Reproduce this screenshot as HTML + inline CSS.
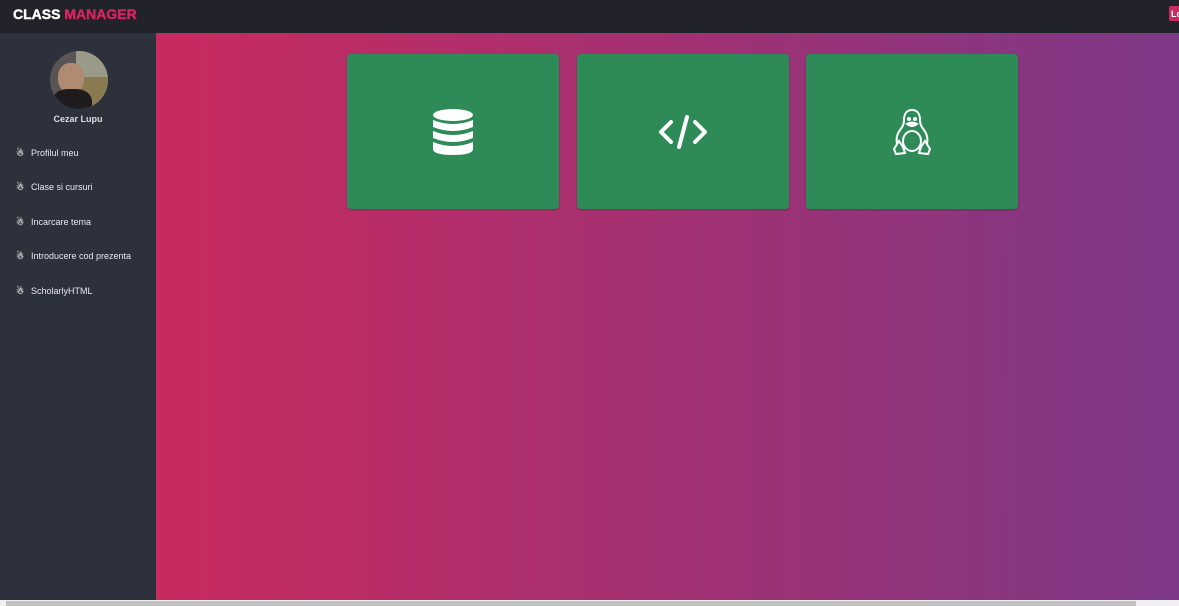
<!DOCTYPE html>
<html><head><meta charset="utf-8"><style>
*{margin:0;padding:0;box-sizing:border-box}
body{width:1179px;height:606px;overflow:hidden;font-family:"Liberation Sans",sans-serif;background:#2d313b;position:relative}
.top{position:absolute;left:0;top:0;width:1179px;height:33px;background:#22232a}
.logo{position:absolute;left:13px;top:6px;font-weight:700;font-size:14px;color:#fff;letter-spacing:0;-webkit-text-stroke:0.4px #fff}
.logo span{color:#d7245f;-webkit-text-stroke:0.4px #d7245f}
.lo{position:absolute;left:1169px;top:6px;width:14px;height:15px;background:#c92a5f;border-radius:2px;color:#fff;font-size:9px;font-weight:bold;padding:3px 0 0 2px}
.av{position:absolute;left:50px;top:51px;width:58px;height:58px;border-radius:50%;overflow:hidden;background:linear-gradient(90deg,#5a5555 0 45%,#9a9a88 45%)}
.av i{position:absolute;left:8px;top:12px;width:26px;height:30px;border-radius:45%;background:#b08a72}
.av u{position:absolute;left:2px;top:38px;width:40px;height:30px;border-radius:40%;background:#1e1c1e}
.av s{position:absolute;left:30px;top:26px;width:30px;height:34px;background:#8a7a50}
.name{position:absolute;left:0;width:156px;top:114px;text-align:center;color:#ddd;font-size:9px;font-weight:bold}
.nav{position:absolute;left:16px;color:#e8e8f0;font-size:9px}
.nav b{display:inline-block;width:7px;margin-right:8px;color:#ccc;font-size:9px}
.main{position:absolute;left:156px;top:33px;width:1023px;height:567px;background:linear-gradient(90deg,#c92a5f,#7d3886)}
.card{position:absolute;top:54px;width:212px;height:155px;background:#2e8b57;border-radius:4px;display:flex;align-items:center;justify-content:center;box-shadow:0 1px 2px rgba(0,0,0,.2)}
.sb{position:absolute;left:0;top:600px;width:1179px;height:6px;background:#f0f0f0}
.sb div{position:absolute;left:6px;top:1px;width:1130px;height:5px;background:#c1c1c1}
</style></head><body>
<div class="top"><div class="logo">CLASS <span>MANAGER</span></div><div class="lo">Lo</div></div>
<div class="av"><s></s><i></i><u></u></div>
<div class="name">Cezar Lupu</div>
<div class="nav" style="top:148px"><b>☃</b>Profilul meu</div>
<div class="nav" style="top:182px"><b>☃</b>Clase si cursuri</div>
<div class="nav" style="top:217px"><b>☃</b>Incarcare tema</div>
<div class="nav" style="top:251px"><b>☃</b>Introducere cod prezenta</div>
<div class="nav" style="top:286px"><b>☃</b>ScholarlyHTML</div>
<div class="main"></div>
<div class="card" style="left:347px"><svg width="42" height="46" viewBox="0 0 42 46" fill="#fff"><ellipse cx="21" cy="6" rx="20" ry="6"/><path d="M1 11q20 8 40 0v7q-20 8-40 0z"/><path d="M1 22q20 8 40 0v7q-20 8-40 0z"/><path d="M1 33q20 8 40 0v7q0 6-20 6t-20-6z"/></svg></div>
<div class="card" style="left:577px"><svg width="50" height="36" viewBox="0 0 50 36" fill="none" stroke="#fff" stroke-width="4" stroke-linecap="round" stroke-linejoin="round"><path d="M13 8L3 18l10 10M37 8l10 10-10 10M29 3l-8 30"/></svg></div>
<div class="card" style="left:806px"><svg width="42" height="50" viewBox="0 0 42 50" fill="none" stroke="#fff" stroke-width="2"><path d="M21 3c-6 0-8 5-8 10 0 4-1 6-4 10s-4 9-3 14M21 3c6 0 8 5 8 10 0 4 1 6 4 10s4 9 3 14"/><ellipse cx="21" cy="34" rx="9" ry="10"/><path d="M16 17q5 4 10 0q-5-3-10 0z" fill="#fff"/><path d="M3 42l5-8 4 6 2 6-9 1zM39 42l-5-8-4 6-2 6 9 1z"/><circle cx="18" cy="12" r="1" fill="#fff"/><circle cx="24" cy="12" r="1" fill="#fff"/></svg></div>
<div class="sb"><div></div></div>
</body></html>
